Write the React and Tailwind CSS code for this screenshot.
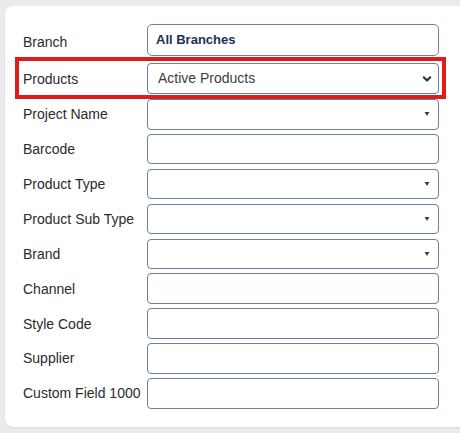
import React from 'react';

const fields = [
  { label: 'Project Name', type: 'select' },
  { label: 'Barcode', type: 'text' },
  { label: 'Product Type', type: 'select' },
  { label: 'Product Sub Type', type: 'select' },
  { label: 'Brand', type: 'select' },
  { label: 'Channel', type: 'text' },
  { label: 'Style Code', type: 'text' },
  { label: 'Supplier', type: 'text' },
  { label: 'Custom Field 1000', type: 'text' },
];

function Caret() {
  return (
    <svg width="6" height="5" viewBox="0 0 6 5" className="absolute right-[8px] top-1/2 -translate-y-1/2">
      <path d="M0.5 0.5h5L3 4.5z" fill="#3a3f47" />
    </svg>
  );
}

function Chevron() {
  return (
    <svg width="10" height="7" viewBox="0 0 10 7" className="absolute right-[6px] top-1/2 -translate-y-1/2">
      <path d="M1.8 1.8L5 5l3.2-3.2" fill="none" stroke="#2f3338" strokeWidth="2.2" strokeLinecap="round" strokeLinejoin="round" />
    </svg>
  );
}

function Row({ label, children, className = '', labelClass = '' }) {
  return (
    <div className={`flex items-center ${className}`}>
      <label className={`w-[124px] shrink-0 text-[14px] text-[#2b2b2b] leading-none ${labelClass}`}>{label}</label>
      {children}
    </div>
  );
}

export default function App() {
  return (
    <div className="h-[433px] w-[460px] overflow-hidden bg-[#ebebeb] pt-[6px] pl-[5px]" style={{ fontFamily: '"Liberation Sans", Arial, sans-serif' }}>
      <div className="w-[470px] h-[421px] bg-white rounded-l-[8px] shadow-[0_1px_2px_rgba(0,0,0,0.08)] pl-[18px] pt-[18px]">
        <div className="w-[416px] flex flex-col">
          <Row label="Branch" labelClass="pt-[4px]">
            <div className="flex-1 h-[32px] border border-[#6b80a3] rounded-[5px] flex items-center pl-[8px] text-[13px] font-bold text-[#1c2f5e]">
              All Branches
            </div>
          </Row>

          <Row label="Products" className="relative mt-[7px]">
            <div className="relative flex-1 h-[31px] border border-[#6b80a3] rounded-[4px] flex items-center pl-[10px] text-[14px] text-[#3d3d3d]">
              Active Products
              <Chevron />
            </div>
            <span className="absolute -top-[6px] -bottom-[5px] -left-[8px] -right-[7px] border-[4px] border-[#e01b1c] pointer-events-none" />
          </Row>

          {fields.map((f, i) => (
            <Row key={f.label} label={f.label} className={i === 0 ? 'mt-[5px]' : 'mt-[4.4px]'}>
              <div className="relative flex-1 h-[30.5px] border border-[#6b80a3] rounded-[4px]">
                {f.type === 'select' && <Caret />}
              </div>
            </Row>
          ))}
        </div>
      </div>
    </div>
  );
}
